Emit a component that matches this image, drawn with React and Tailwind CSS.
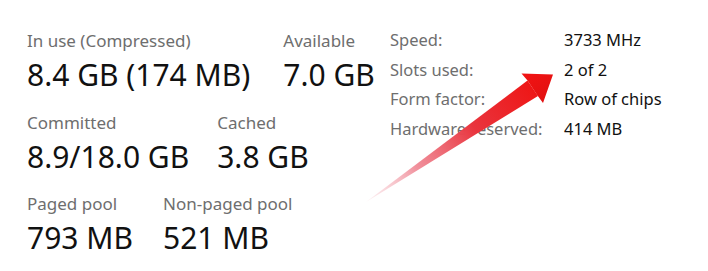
import React from "react";

function Stat({ label, value }) {
  return (
    <div className="flex flex-col">
      <div className="text-[17px] leading-[20px] text-[#6e6e6e] whitespace-nowrap">{label}</div>
      <div className="mt-[6px] text-[30px] leading-[36px] text-[#111] whitespace-nowrap">{value}</div>
    </div>
  );
}

const rows = [
  ["Speed:", "3733 MHz"],
  ["Slots used:", "2 of 2"],
  ["Form factor:", "Row of chips"],
  ["Hardware reserved:", "414 MB"],
];

function Arrow() {
  return (
    <svg className="absolute left-0 top-0 pointer-events-none" width="708" height="271" viewBox="0 0 708 271">
      <defs>
        <linearGradient id="shaft" x1="367" y1="202" x2="532" y2="88" gradientUnits="userSpaceOnUse">
          <stop offset="0" stopColor="#f6c4cc" stopOpacity="0.25" />
          <stop offset="0.3" stopColor="#ef8592" stopOpacity="0.9" />
          <stop offset="0.65" stopColor="#e9343d" />
          <stop offset="1" stopColor="#ee1717" />
        </linearGradient>
        <linearGradient id="head" x1="522" y1="74" x2="545" y2="102" gradientUnits="userSpaceOnUse">
          <stop offset="0" stopColor="#f21414" />
          <stop offset="1" stopColor="#e21010" />
        </linearGradient>
      </defs>
      <polygon points="366,202 527.5,80.5 538,96" fill="url(#shaft)" />
      <polygon points="521.5,73.5 553,74.5 543,103 537.5,95.5 527.5,80.5" fill="url(#head)" />
    </svg>
  );
}

export default function App() {
  return (
    <div className="relative w-[708px] h-[271px] bg-white overflow-hidden" style={{ fontFamily: '"Noto Sans", "Open Sans", sans-serif' }}>
      <div className="flex items-start pt-[25px] pl-[27px]">
        <div className="w-[363px] mt-[6px] flex flex-col gap-[19.5px]">
          <div className="flex gap-[33px]">
            <Stat label="In use (Compressed)" value="8.4 GB (174 MB)" />
            <Stat label="Available" value="7.0 GB" />
          </div>
          <div className="flex gap-[28px]">
            <Stat label="Committed" value="8.9/18.0 GB" />
            <Stat label="Cached" value="3.8 GB" />
          </div>
          <div className="flex gap-[30px]">
            <Stat label="Paged pool" value="793 MB" />
            <Stat label="Non-paged pool" value="521 MB" />
          </div>
        </div>
        <div className="grid grid-cols-[174px_auto] text-[16.5px] leading-[29.5px]">
          {rows.map(([l, v]) => (
            <React.Fragment key={l}>
              <div className="text-[#6e6e6e] whitespace-nowrap">{l}</div>
              <div className="text-[#111] whitespace-nowrap">{v}</div>
            </React.Fragment>
          ))}
        </div>
      </div>
      <Arrow />
    </div>
  );
}
